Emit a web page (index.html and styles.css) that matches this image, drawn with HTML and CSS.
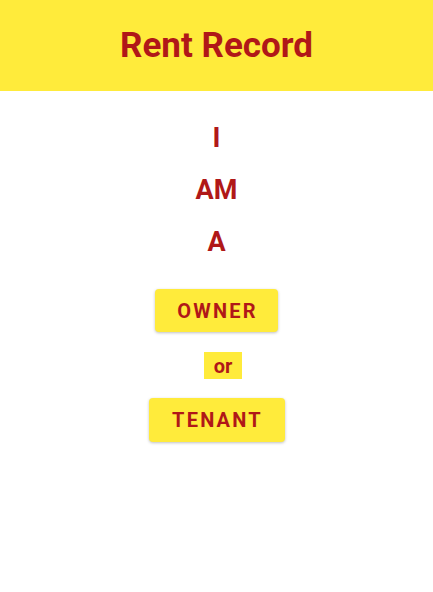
FILE: index.html
```html
<!DOCTYPE html>
<html>
<head>
<meta charset="utf-8">
<link rel="stylesheet" href="styles.css">
</head>
<body>
<header class="bar"><h1 class="title">Rent Record</h1></header>
<main class="content">
  <div class="word">I</div>
  <div class="word">AM</div>
  <div class="word">A</div>
  <button class="btn btn-owner">OWNER</button>
  <div class="or">or</div>
  <button class="btn btn-tenant">TENANT</button>
</main>
</body>
</html>
```
FILE: styles.css
```css
html, body { margin: 0; padding: 0; background: #fff; }
body { font-family: Roboto, "Noto Sans", sans-serif; width: 433px; height: 592px; }
.bar { background: #FFEB3B; height: 91px; display: flex; align-items: center; justify-content: center; }
.title { margin: 0; color: #B01818; font-size: 35px; font-weight: 700; line-height: 1; padding-top: 0; }
.content { display: flex; flex-direction: column; align-items: center; padding-top: 21px; }
.word { color: #B01818; font-weight: 700; font-size: 27px; line-height: 52px; height: 52px; }
.btn { font-family: Roboto, sans-serif; border: none; background: #FFEB3B; color: #B01818; font-weight: 700; font-size: 20px; letter-spacing: 2.2px; border-radius: 4px; box-shadow: 0 1px 3px rgba(0,0,0,0.25); padding: 0 0 0 2px; height: 43px; display: flex; align-items: center; justify-content: center; }
.btn-owner { width: 123px; margin-top: 21px; }
.btn-tenant { width: 136px; height: 44px; }
.or { background: #FFEB3B; color: #B01818; font-weight: 700; font-size: 20px; width: 38px; height: 27px; display: flex; align-items: center; justify-content: center; margin: 20px 0 19px 13px; }
```
